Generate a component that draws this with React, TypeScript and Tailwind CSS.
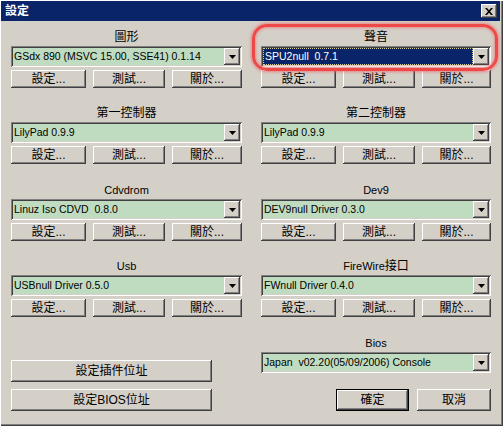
import type { ReactNode } from "react";

const FONT = { fontFamily: '"Liberation Sans", "Noto Sans CJK TC", sans-serif' };

const raised = "shadow-[inset_-1px_-1px_#404040,inset_1px_1px_#ffffff,inset_-2px_-2px_#808080]";
const sunken =
  "shadow-[inset_1px_1px_#808080,inset_-1px_-1px_#ffffff,inset_2px_2px_#404040,inset_-2px_-2px_#d4d0c8]";

function Btn({ children, className = "", primary = false }: { children: ReactNode; className?: string; primary?: boolean }) {
  return (
    <div
      className={`flex items-center justify-center bg-[#d4d0c8] text-[12px] leading-none text-black ${
        primary
          ? "shadow-[inset_0_0_0_1px_#000000,inset_-2px_-2px_#404040,inset_2px_2px_#ffffff,inset_-3px_-3px_#808080]"
          : raised
      } ${className}`}
    >
      {children}
    </div>
  );
}

function Combo({ value, selected = false }: { value: string; selected?: boolean }) {
  return (
    <div className={`flex h-[21px] p-[2px] bg-[#d4d0c8] ${sunken}`}>
      <div
        className={`flex-1 flex items-center pl-[1px] text-[10.5px] whitespace-pre ${
          selected
            ? "bg-[#0a246a] text-white border border-dotted border-[#d8d0a0]"
            : "bg-[#c0dcc0] text-black"
        }`}
      >
        {value}
      </div>
      <div className={`w-[16px] flex items-center justify-center bg-[#d4d0c8] ${raised}`}>
        <svg width="7" height="4" viewBox="0 0 7 4">
          <path d="M0 0h7L3.5 4z" fill="#000" />
        </svg>
      </div>
    </div>
  );
}

function Label({ children }: { children: ReactNode }) {
  return <div className="h-[16px] flex items-center justify-center text-[11px] text-black">{children}</div>;
}

function Section({ label, value, selected = false }: { label: ReactNode; value: string; selected?: boolean }) {
  return (
    <div className="flex flex-col">
      <Label>{label}</Label>
      <div className="mt-[1px]">
        <Combo value={value} selected={selected} />
      </div>
      <div className="mt-[3px] flex gap-[7px]">
        <Btn className="h-[18px] w-[75px]">設定...</Btn>
        <Btn className="h-[18px] w-[72px]">測試...</Btn>
        <Btn className="h-[18px] flex-1">關於...</Btn>
      </div>
    </div>
  );
}

const cjk = (t: string) => <span className="text-[12px]">{t}</span>;

export default function App() {
  return (
    <div
      style={FONT}
      className="relative w-[503px] h-[426px] bg-[#d4d0c8] pt-[1px] pl-[1px] pr-[3px] pb-[3px] shadow-[inset_1px_1px_#ffffff,inset_-1px_-1px_#404040,inset_-2px_-2px_#808080] overflow-hidden"
    >
      {/* title bar */}
      <div className="h-[20px] bg-[#0a246a] flex items-center justify-between pl-[4px] pr-[3px]">
        <span className="text-white font-bold text-[12px]">設定</span>
        <div className={`w-[16px] h-[14px] bg-[#d4d0c8] flex items-center justify-center ${raised}`}>
          <svg width="8" height="7" viewBox="0 0 8 7">
            <path d="M0 0h2l2 2.2L6 0h2L5 3.5 8 7H6L4 4.8 2 7H0l3-3.5z" fill="#000" />
          </svg>
        </div>
      </div>

      <div className="pl-[10px] pt-[8px] grid grid-cols-[231px_230px] grid-rows-[76px_77px_76px_77px_auto] gap-x-[19px]">
        <Section label={cjk("圖形")} value="GSdx 890 (MSVC 15.00, SSE41) 0.1.14" />
        <Section label={cjk("聲音")} value="SPU2null  0.7.1" selected />
        <Section label={cjk("第一控制器")} value="LilyPad 0.9.9" />
        <Section label={cjk("第二控制器")} value="LilyPad 0.9.9" />
        <Section label="Cdvdrom" value="Linuz Iso CDVD  0.8.0" />
        <Section label="Dev9" value="DEV9null Driver 0.3.0" />
        <Section label="Usb" value="USBnull Driver 0.5.0" />
        <Section label={<>FireWire{cjk("接口")}</>} value="FWnull Driver 0.4.0" />

        <div className="pt-[25px] flex flex-col gap-[7px]">
          <Btn className="h-[22px] w-[201px]">設定插件位址</Btn>
          <Btn className="h-[22px] w-[201px]">設定BIOS位址</Btn>
        </div>
        <div className="flex flex-col">
          <Label>Bios</Label>
          <div className="mt-[1px]">
            <Combo value="Japan  v02.20(05/09/2006) Console" />
          </div>
          <div className="mt-[16px] flex justify-end gap-[8px]">
            <Btn primary className="h-[22px] w-[73px]">確定</Btn>
            <Btn className="h-[22px] w-[74px]">取消</Btn>
          </div>
        </div>
      </div>

      {/* red annotation ring */}
      <div className="absolute left-[252px] top-[24px] w-[246px] h-[47px] rounded-[15px] border-[3px] border-[#ee4848] shadow-[0_0_3px_1px_rgba(240,100,100,0.7),inset_0_0_3px_1px_rgba(240,100,100,0.6)]" />
    </div>
  );
}
